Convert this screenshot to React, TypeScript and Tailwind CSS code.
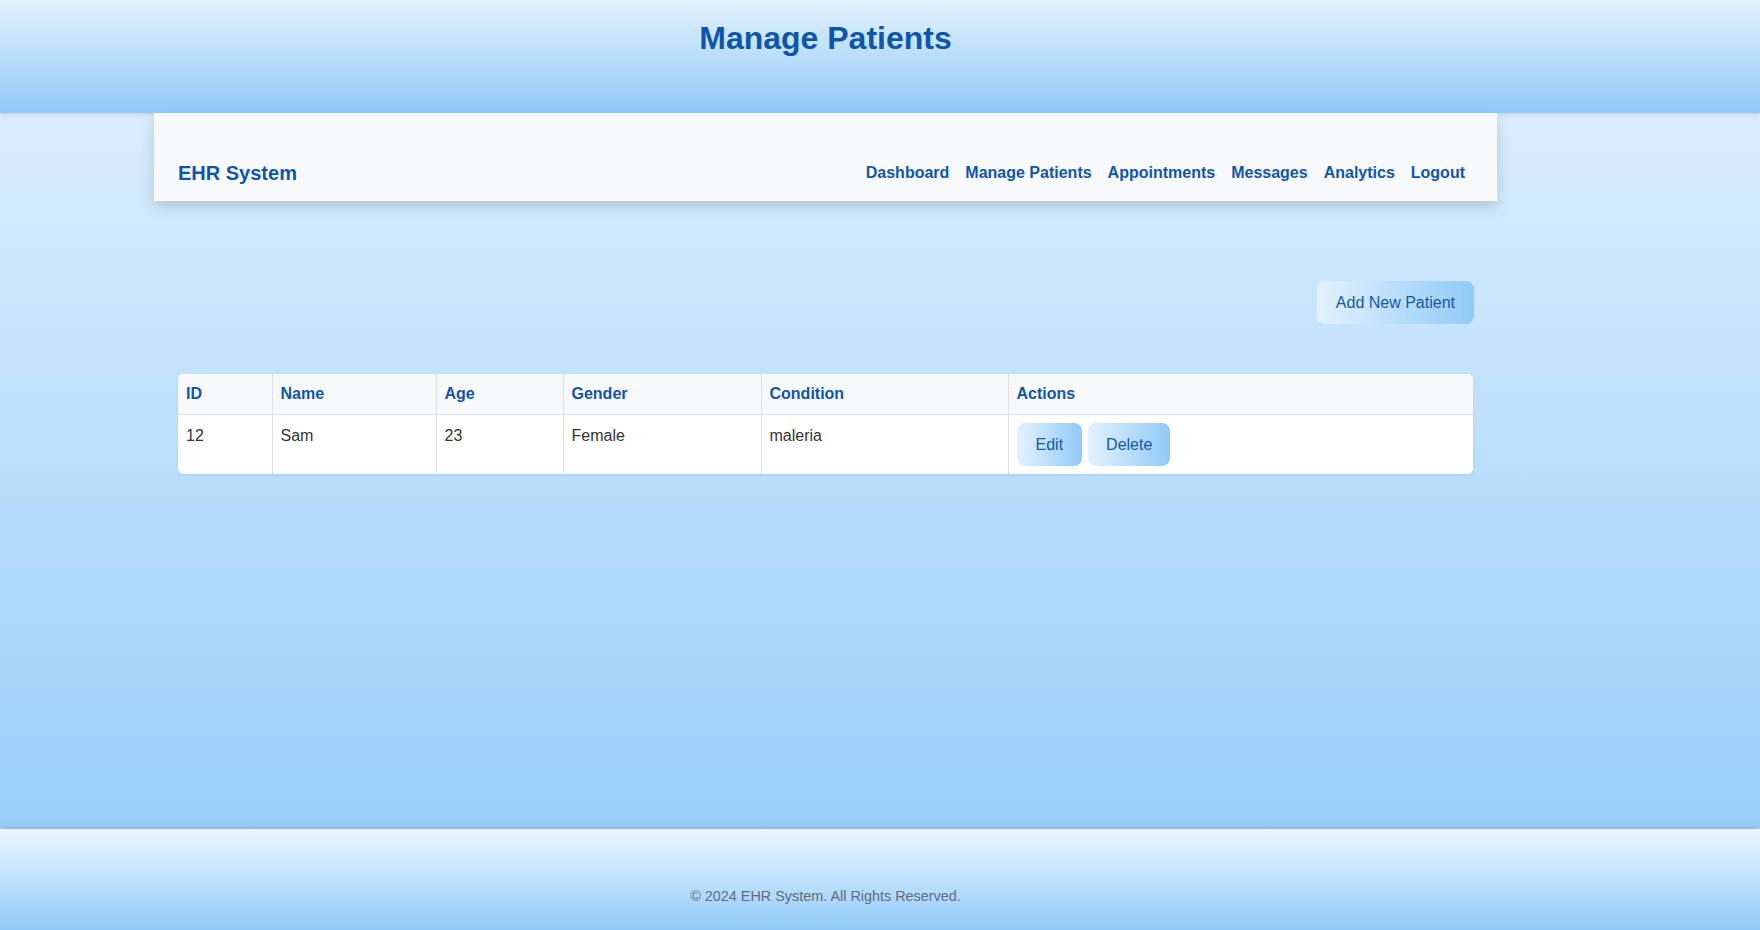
const patients = [
  { id: 12, name: "Sam", age: 23, gender: "Female", condition: "maleria" },
];

const navLinks = ["Dashboard", "Manage Patients", "Appointments", "Messages", "Analytics", "Logout"];

export default function App() {
  return (
    <div className="min-h-screen flex flex-col bg-linear-to-b from-[#e3f2fd] to-[#90caf9] font-['Liberation_Sans',Arial,sans-serif]">
      {/* Header */}
      <header className="relative z-10 h-[113px] bg-linear-to-b from-[#e3f2fd] to-[#90caf9] shadow-[0_2px_4px_rgba(0,0,0,0.1)]">
        <div className="w-[1651px] pt-[20px] text-center">
          <h1 className="text-[32px] leading-[normal] font-bold text-[#0f56ab]">Manage Patients</h1>
        </div>
      </header>

      {/* Nav */}
      <div className="relative z-20 w-[1651px] px-[154px]">
        <nav className="h-[88px] bg-[#f8f9fa] px-6 pb-[16px] flex items-end justify-between shadow-[0_6px_14px_rgba(0,0,0,0.15)]">
          <span className="text-[20px] leading-[normal] font-bold text-[#0f56ab]">EHR System</span>
          <ul className="flex">
            {navLinks.map((link) => (
              <li key={link}>
                <a className="px-2 text-[16px] leading-[normal] font-bold text-[#0f56ab] cursor-pointer">{link}</a>
              </li>
            ))}
          </ul>
        </nav>
      </div>

      {/* Main */}
      <main className="flex-1 w-[1651px] px-[154px]">
        <div className="px-6 pt-[80px]">
          <div className="flex justify-end mb-[50px]">
            <button className="px-[19px] py-[12.5px] text-[16px] leading-[normal] text-[#1458a8] rounded-lg bg-linear-to-r from-[#e3f2fd] to-[#90caf9] -mr-px">
              Add New Patient
            </button>
          </div>

          <div className="rounded-[5px] overflow-hidden bg-white shadow-[0_1px_3px_rgba(0,0,0,0.08)]">
            <table className="w-full table-fixed border-collapse text-[16px] leading-6">
              <thead>
                <tr className="bg-[#f8f9fa] border-b border-[#dee2e6]">
                  <th className="w-[94px] p-2 text-left font-bold text-[#0f56ab] border-r border-[#dee2e6]">ID</th>
                  <th className="w-[164px] p-2 text-left font-bold text-[#0f56ab] border-r border-[#dee2e6]">Name</th>
                  <th className="w-[127px] p-2 text-left font-bold text-[#0f56ab] border-r border-[#dee2e6]">Age</th>
                  <th className="w-[198px] p-2 text-left font-bold text-[#0f56ab] border-r border-[#dee2e6]">Gender</th>
                  <th className="w-[247px] p-2 text-left font-bold text-[#0f56ab] border-r border-[#dee2e6]">Condition</th>
                  <th className="p-2 text-left font-bold text-[#0f56ab]">Actions</th>
                </tr>
              </thead>
              <tbody>
                {patients.map((p) => (
                  <tr key={p.id} className="text-[#333]">
                    <td className="p-2 pt-[9px] align-top border-r border-[#dee2e6]">{p.id}</td>
                    <td className="p-2 pt-[9px] align-top border-r border-[#dee2e6]">{p.name}</td>
                    <td className="p-2 pt-[9px] align-top border-r border-[#dee2e6]">{p.age}</td>
                    <td className="p-2 pt-[9px] align-top border-r border-[#dee2e6]">{p.gender}</td>
                    <td className="p-2 pt-[9px] align-top border-r border-[#dee2e6]">{p.condition}</td>
                    <td className="p-2 align-top">
                      <div className="flex gap-[6px]">
                        <button className="px-[19px] py-[12.5px] text-[16px] leading-[normal] text-[#1458a8] rounded-lg bg-linear-to-r from-[#e3f2fd] to-[#90caf9]">
                          Edit
                        </button>
                        <button className="px-[18px] py-[12.5px] text-[16px] leading-[normal] text-[#1458a8] rounded-lg bg-linear-to-r from-[#e3f2fd] to-[#90caf9]">
                          Delete
                        </button>
                      </div>
                    </td>
                  </tr>
                ))}
              </tbody>
            </table>
          </div>
        </div>
      </main>

      {/* Footer */}
      <footer className="relative z-10 h-[101px] bg-linear-to-b from-[#eef8ff] to-[#90caf9] shadow-[0_-2px_5px_rgba(0,0,0,0.1)]">
        <div className="w-[1651px] pt-[59px] text-center">
          <p className="text-[14.4px] leading-[normal] text-[#5f6d7c]">© 2024 EHR System. All Rights Reserved.</p>
        </div>
      </footer>
    </div>
  );
}
